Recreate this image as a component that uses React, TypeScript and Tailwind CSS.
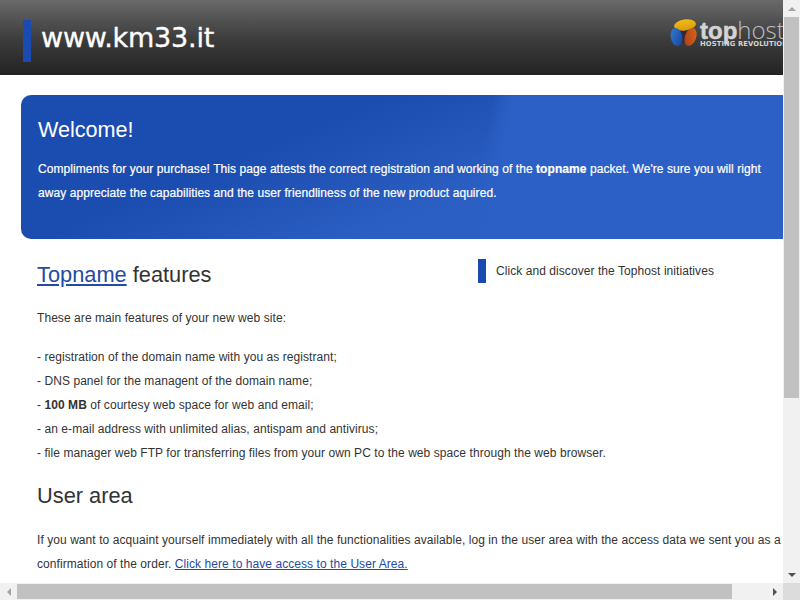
export default function App() {
  return (
    <div className="relative w-[800px] h-[600px] overflow-hidden bg-white text-[#333] font-['Liberation_Sans',Arial,sans-serif] text-[12px] tracking-[0.065px] flex flex-col">
      <div className="flex flex-1 min-h-0">
        <div className="w-[783px] overflow-hidden">
          <div className="w-[1000px]">
            <header className="h-[75px] bg-gradient-to-b from-[#6a6a6a] via-[#3e3e3e] to-[#232323] flex items-start pl-[23px] pt-[20px] overflow-hidden">
              <div className="w-[8px] h-[42px] bg-[#1a4bb0] shrink-0" />
              <div className="w-[160px] shrink-0 ml-[10px] text-[27px] leading-[36px] text-white font-['DejaVu_Sans',Verdana,sans-serif] tracking-[-0.2px] [-webkit-text-stroke:0.35px_white] whitespace-nowrap">www.km33.it</div>
              <div className="ml-[469px] mt-[-1px] flex items-start shrink-0">
                <svg width="28" height="28" viewBox="0 0 28 28" className="shrink-0">
                  <defs>
                    <linearGradient id="lobeY" x1="0" y1="0" x2="0" y2="1">
                      <stop offset="0" stopColor="#f2bc14" />
                      <stop offset="1" stopColor="#d89a10" />
                    </linearGradient>
                    <linearGradient id="lobeB" x1="0" y1="0" x2="1" y2="1">
                      <stop offset="0" stopColor="#2f7fd0" />
                      <stop offset="1" stopColor="#1a3f9c" />
                    </linearGradient>
                    <linearGradient id="lobeO" x1="1" y1="0" x2="0" y2="1">
                      <stop offset="0" stopColor="#dd6a1c" />
                      <stop offset="1" stopColor="#a83a18" />
                    </linearGradient>
                  </defs>
                  <circle cx="14" cy="15" r="9" fill="#2a2a3a" />
                  <ellipse cx="15" cy="6" rx="11" ry="5.5" fill="url(#lobeY)" transform="rotate(-8 15 6)" />
                  <ellipse cx="6.5" cy="18" rx="5.8" ry="9.2" fill="url(#lobeB)" transform="rotate(-10 6.5 18)" />
                  <ellipse cx="20.5" cy="18" rx="5.6" ry="9.2" fill="url(#lobeO)" transform="rotate(20 20.5 18)" />
                </svg>
                <div className="ml-[2px] text-[#d4d4d4] whitespace-nowrap">
                  <div className="text-[24px] leading-[20px] mt-[1px] tracking-[0px]"><span className="font-bold [-webkit-text-stroke:0.5px_#d4d4d4]">top</span><span className="font-['Open_Sans',sans-serif] font-light text-[#bdbdbd]">host</span></div>
                  <div className="mt-[-1px] text-[6.8px] leading-[8px] font-['DejaVu_Sans',sans-serif] font-bold tracking-[0.1px]">HOSTING REVOLUTION</div>
                </div>
              </div>
            </header>
            <section className="mt-[20px] ml-[21px] h-[144px] rounded-l-[10px] bg-[linear-gradient(100deg,transparent_47%,#2d60c6_49%),linear-gradient(158deg,#1b4cb0_0%,#1b4cb0_28%,#2c5fc3_52%,#2d60c6_100%)] pl-[17px] pt-[21px] text-white overflow-hidden w-[979px]">
              <h1 className="text-[21.6px] leading-[28px] tracking-normal">Welcome!</h1>
              <p className="mt-[13px] w-[745px] leading-[24px] [-webkit-text-stroke:0.2px_white]">
                Compliments for your purchase! This page attests the correct registration and working of the <b>topname</b> packet. We're sure you will right away appreciate the capabilities and the user friendliness of the new product aquired.
              </p>
            </section>
            <div className="flex pl-[37px] pt-[20px]">
              <div className="w-[441px] shrink-0">
                <h2 className="text-[21.8px] leading-[32px] tracking-normal"><a href="#" className="text-[#254aa5] underline">Topname</a> features</h2>
              </div>
              <div className="flex items-center h-[24px]">
                <div className="w-[8px] h-[24px] bg-[#1a4bb0]" />
                <span className="ml-[10px] whitespace-nowrap">Click and discover the Tophost initiatives</span>
              </div>
            </div>
            <div className="pl-[37px] w-[790px]">
              <p className="mt-[15px] leading-[24px] whitespace-nowrap">These are main features of your new web site:</p>
              <ul className="mt-[15px] leading-[24px] whitespace-nowrap">
                <li>- registration of the domain name with you as registrant;</li>
                <li>- DNS panel for the managent of the domain name;</li>
                <li>- <b>100 MB</b> of courtesy web space for web and email;</li>
                <li>- an e-mail address with unlimited alias, antispam and antivirus;</li>
                <li>- file manager web FTP for transferring files from your own PC to the web space through the web browser.</li>
              </ul>
              <h2 className="mt-[15px] text-[21.8px] leading-[32px] tracking-normal">User area</h2>
              <p className="mt-[16px] leading-[24px] w-[750px]">
                If you want to acquaint yourself immediately with all the functionalities available, log in the user area with the access data we sent you as a confirmation of the order. <a href="#" className="text-[#254aa5] underline">Click here to have access to the User Area.</a>
              </p>
            </div>
          </div>
        </div>
        <div className="w-[17px] bg-[#f1f1f1] flex flex-col items-center justify-between">
          <div className="flex flex-col items-center w-full">
            <div className="h-[17px] flex items-center justify-center">
              <div className="w-0 h-0 border-x-[4px] border-x-transparent border-b-[4px] border-b-[#a3a3a3]" />
            </div>
            <div className="w-[15px] h-[381px] bg-[#c1c1c1]" />
          </div>
          <div className="h-[17px] flex items-center justify-center">
            <div className="w-0 h-0 border-x-[4px] border-x-transparent border-t-[4px] border-t-[#505050]" />
          </div>
        </div>
      </div>
      <div className="h-[17px] flex shrink-0 bg-[#f1f1f1]">
        <div className="w-[17px] flex items-center justify-center">
          <div className="w-0 h-0 border-y-[4px] border-y-transparent border-r-[4px] border-r-[#a3a3a3]" />
        </div>
        <div className="w-[715px] h-[15px] mt-[1px] bg-[#c1c1c1]" />
        <div className="w-[34px]" />
        <div className="w-[17px] flex items-center justify-center">
          <div className="w-0 h-0 border-y-[4px] border-y-transparent border-l-[4px] border-l-[#505050]" />
        </div>
        <div className="w-[17px] bg-[#dcdcdc]" />
      </div>
    </div>
  );
}
